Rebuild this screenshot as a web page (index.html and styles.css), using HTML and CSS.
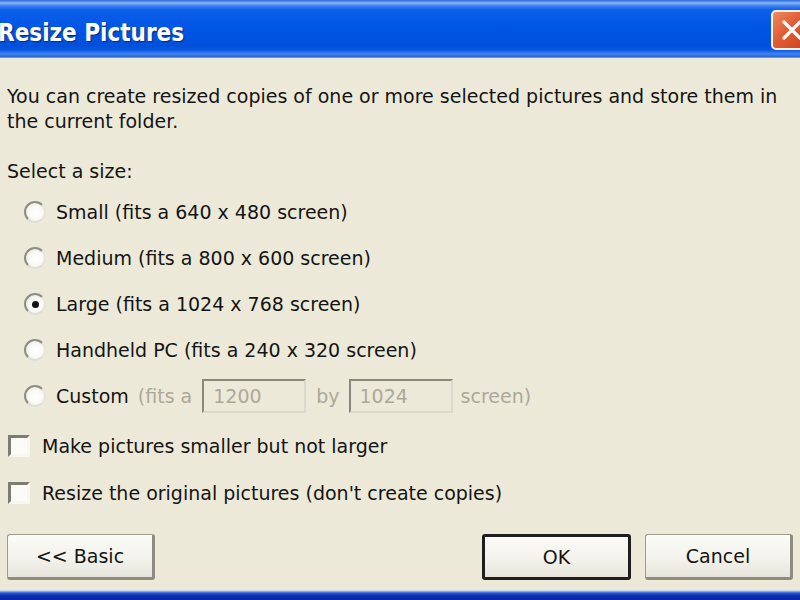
FILE: index.html
```html
<!DOCTYPE html>
<html>
<head>
<meta charset="utf-8">
<link rel="stylesheet" href="styles.css">
</head>
<body>
<div class="window">
  <div class="titlebar">
    <span class="title">Resize Pictures</span>
    <span class="close"><svg width="22" height="22" viewBox="0 0 22 22"><path d="M3 3 L19 19 M19 3 L3 19" stroke="#fff" stroke-width="3.2" stroke-linecap="round"/></svg></span>
  </div>
  <div class="content">
    <p class="intro">You can create resized copies of one or more selected pictures and store them in the current folder.</p>
    <p class="label">Select a size:</p>
    <div class="options">
      <div class="row"><span class="radio"></span><span>Small (fits a 640 x 480 screen)</span></div>
      <div class="row"><span class="radio"></span><span>Medium (fits a 800 x 600 screen)</span></div>
      <div class="row"><span class="radio checked"></span><span>Large (fits a 1024 x 768 screen)</span></div>
      <div class="row"><span class="radio"></span><span>Handheld PC (fits a 240 x 320 screen)</span></div>
      <div class="row"><span class="radio"></span><span>Custom</span><span class="dim fits">(fits a</span><span class="field">1200</span><span class="dim by">by</span><span class="field">1024</span><span class="dim screen">screen)</span></div>
    </div>
    <div class="checks">
      <div class="crow"><span class="check"></span><span>Make pictures smaller but not larger</span></div>
      <div class="crow"><span class="check"></span><span>Resize the original pictures (don't create copies)</span></div>
    </div>
    <div class="buttons">
      <span class="btn">&lt;&lt; Basic</span>
      <span class="spacer"></span>
      <span class="btn default">OK</span>
      <span class="btn">Cancel</span>
    </div>
  </div>
  <div class="bottombar"></div>
</div>
</body>
</html>
```
FILE: styles.css
```css
html, body {
  margin: 0;
  padding: 0;
}
body {
  width: 800px;
  height: 600px;
  overflow: hidden;
  background: #ece9d8;
  font-family: "DejaVu Sans", sans-serif;
  font-size: 19px;
  color: #141414;
}
.window {
  width: 800px;
  height: 600px;
  display: flex;
  flex-direction: column;
}
.titlebar {
  height: 58px;
  flex: none;
  display: flex;
  align-items: center;
  overflow: hidden;
  background: linear-gradient(to bottom, #2a68d8 0px, #8ab6f6 3px, #3a80f0 6px, #0c5fe8 10px, #0055e6 28px, #0050dc 46px, #0a58e2 50px, #4284f2 54px, #2662d4 57px, #c8c4b4 58px);
}
.title {
  margin-left: -2px;
  margin-top: 7px;
  color: #fff;
  font-family: "DejaVu Sans Condensed", "DejaVu Sans", sans-serif;
  font-stretch: condensed;
  font-weight: bold;
  font-size: 24px;
  text-shadow: 1px 1px 1px #0a2a80;
  flex: 1;
}
.close {
  width: 38px;
  height: 36px;
  margin-right: -13px;
  margin-top: 2px;
  border: 2px solid #f4f0ee;
  border-radius: 5px;
  background: linear-gradient(135deg, #f08a60 0%, #e15a32 45%, #c8431e 100%);
  display: flex;
  align-items: center;
  justify-content: center;
}
.content {
  flex: 1;
  display: flex;
  flex-direction: column;
  padding: 26px 7px 0 7px;
}
.intro {
  margin: 0;
  line-height: 25px;
  width: 786px;
}
.label {
  margin: 25px 0 0 0;
  line-height: 25px;
}
.options {
  margin-top: 5px;
  display: flex;
  flex-direction: column;
}
.row {
  height: 46px;
  display: flex;
  align-items: center;
  padding-left: 17px;
}
.radio {
  width: 22px;
  height: 22px;
  border-radius: 50%;
  box-sizing: border-box;
  background: radial-gradient(circle at 55% 55%, #ffffff 0%, #f8f8f4 50%, #e4e2d8 100%);
  border: 2px solid #8e8c84;
  border-right-color: #e6e4dc;
  border-bottom-color: #e0ded6;
  margin-right: 10px;
  display: flex;
  align-items: center;
  justify-content: center;
}
.radio.checked::after {
  content: "";
  width: 7px;
  height: 7px;
  border-radius: 50%;
  background: #111;
}
.dim {
  color: #aca899;
}
.fits {
  margin-left: 9px;
  margin-right: 10px;
}
.by {
  margin-left: 10px;
  margin-right: 9px;
}
.screen {
  margin-left: 8px;
}
.field {
  width: 104px;
  height: 34px;
  box-sizing: border-box;
  border: 2px solid #dcd9cc;
  border-top-color: #8a877c;
  border-left-color: #8a877c;
  color: #aca899;
  padding-left: 9px;
  display: flex;
  align-items: center;
}
.checks {
  display: flex;
  flex-direction: column;
  margin-top: 3px;
}
.crow {
  height: 47px;
  display: flex;
  align-items: center;
  padding-left: 1px;
}
.check {
  width: 22px;
  height: 22px;
  box-sizing: border-box;
  border: 3px solid #f8f7f2;
  border-top-color: #7d7b72;
  border-left-color: #7d7b72;
  background: #fbfbf8;
  margin-right: 12px;
}
.buttons {
  margin-top: 18px;
  display: flex;
  align-items: center;
  gap: 14px;
}
.spacer {
  flex: 1;
}
.btn {
  width: 148px;
  height: 46px;
  box-sizing: border-box;
  display: flex;
  align-items: center;
  justify-content: center;
  border: 1px solid #9d9a8e;
  border-right: 3px solid #8e8b80;
  border-bottom: 3px solid #8e8b80;
  border-radius: 3px;
  background: linear-gradient(to bottom, #fbfbf8 0%, #f2f1ea 60%, #e6e4da 100%);
}
.btn.default {
  border: 3px solid #1e1e1e;
  width: 149px;
}
.bottombar {
  height: 10px;
  flex: none;
  background: linear-gradient(to bottom, #ece9d8 0px, #a9c0ec 1px, #2a58d0 3px, #0a2ab0 6px, #0826a6 10px);
}
```
